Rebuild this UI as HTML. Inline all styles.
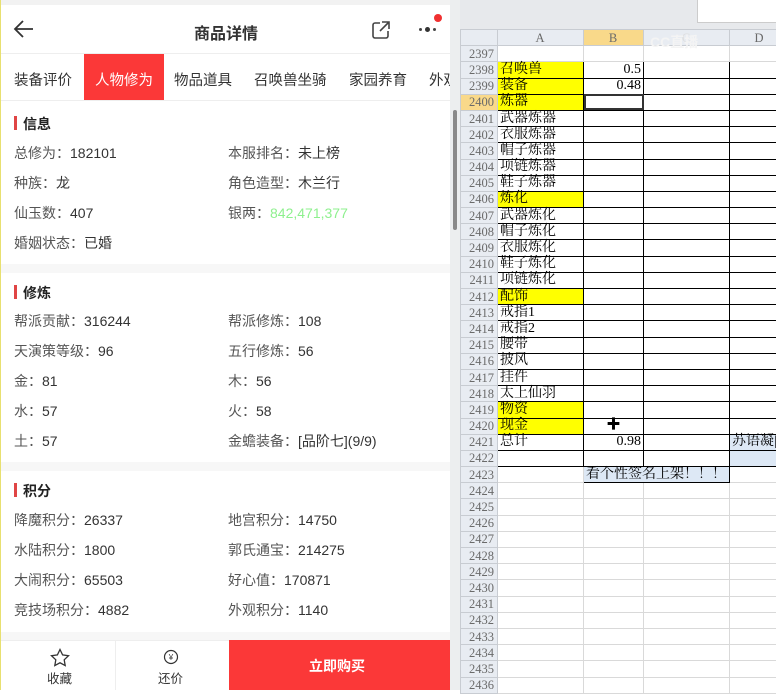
<!DOCTYPE html>
<html><head><meta charset="utf-8"><style>
*{margin:0;padding:0;box-sizing:border-box}
body{width:776px;height:690px;overflow:hidden;position:relative;background:#fff;font-family:"Liberation Sans","Noto Sans CJK SC",sans-serif}
#L{position:absolute;left:0;top:0;width:452px;height:690px;background:#fff;border-left:1px solid #e8e070;overflow:hidden}
.a{position:absolute;white-space:nowrap}
.t{font-size:14px;color:#555}
.t b{font-weight:normal;color:#333}
.h{font-size:14px;font-weight:bold;color:#222;padding-left:9px}
.h:before{content:"";position:absolute;left:0;top:2px;width:3px;height:14px;background:#e04545}
.sep{position:absolute;left:0;width:452px;background:#f7f7f7}
#R{position:absolute;left:450px;top:0;width:326px;height:690px;background:#fff}
table{border-collapse:collapse;table-layout:fixed;width:329px;font-family:"Liberation Serif","Noto Serif CJK SC",serif;font-size:14px}
td{height:16.2px;border:1px solid #d9d9d9;padding:0 2px;line-height:14px;overflow:visible;white-space:nowrap;color:#000}
td.n{background:#e8ecf2;color:#6a6a6a;text-align:right;font-size:12.5px;border-color:#c8ccd2;padding-right:3px}
td.y{background:#ffff00}
td.k{border-color:#000}
td.r{text-align:right}
</style></head><body>
<div id="L">
 <div style="position:absolute;left:0;top:0;width:452px;height:5px;background:#f2f2f2"></div>
 <svg class="a" style="left:12px;top:18px" width="22" height="22" viewBox="0 0 22 22"><path d="M20 11H3M10 3L2 11l8 8" fill="none" stroke="#333" stroke-width="1.8"/></svg>
 <div class="a" style="left:193px;top:20px;font-size:16px;font-weight:bold;color:#333">商品详情</div>
 <svg class="a" style="left:370px;top:20px" width="20" height="20" viewBox="0 0 20 20"><path d="M9 3H4a2 2 0 0 0-2 2v11a2 2 0 0 0 2 2h11a2 2 0 0 0 2-2v-5M11 2h7v7M18 2l-9 9" fill="none" stroke="#444" stroke-width="1.6"/></svg>
 <div class="a" style="left:418px;top:28px;width:3px;height:3px;border-radius:2px;background:#444"></div>
 <div class="a" style="left:424px;top:27px;width:5px;height:5px;border-radius:3px;background:#333"></div>
 <div class="a" style="left:432px;top:28px;width:3px;height:3px;border-radius:2px;background:#444"></div>
 <div class="a" style="left:433px;top:14px;width:8px;height:8px;border-radius:4px;background:#f03030"></div>
 <div style="position:absolute;left:0;top:53px;width:452px;height:1px;background:#eee"></div>
 <div class="a" style="left:83px;top:54px;width:80px;height:46px;background:#fb3838"></div>
 <div class="a t" style="top:69px;left:13px;color:#333;font-size:14.5px">装备评价</div>
 <div class="a t" style="top:69px;left:94px;color:#fff;font-size:14.5px">人物修为</div>
 <div class="a t" style="top:69px;left:173px;color:#333;font-size:14.5px">物品道具</div>
 <div class="a t" style="top:69px;left:253px;color:#333;font-size:14.5px">召唤兽坐骑</div>
 <div class="a t" style="top:69px;left:348px;color:#333;font-size:14.5px">家园养育</div>
 <div class="a t" style="top:69px;left:428px;color:#333;font-size:14.5px">外观</div>
 <div style="position:absolute;left:0;top:100px;width:452px;height:1px;background:#eee"></div>

 <div class="a h" style="left:13px;top:114px">信息</div>
 <div class="a t" style="left:13px;top:143px">总修为：<b>182101</b></div><div class="a t" style="left:227px;top:143px">本服排名：<b>未上榜</b></div>
 <div class="a t" style="left:13px;top:173px">种族：<b>龙</b></div><div class="a t" style="left:227px;top:173px">角色造型：<b>木兰行</b></div>
 <div class="a t" style="left:13px;top:203px">仙玉数：<b>407</b></div><div class="a t" style="left:227px;top:203px">银两：<span style="color:#8ef08e">842,471,377</span></div>
 <div class="a t" style="left:13px;top:233px">婚姻状态：<b>已婚</b></div>
 <div class="sep" style="top:264px;height:9px"></div>

 <div class="a h" style="left:13px;top:283px">修炼</div>
 <div class="a t" style="left:13px;top:311px">帮派贡献：<b>316244</b></div><div class="a t" style="left:227px;top:311px">帮派修炼：<b>108</b></div>
 <div class="a t" style="left:13px;top:341px">天演策等级：<b>96</b></div><div class="a t" style="left:227px;top:341px">五行修炼：<b>56</b></div>
 <div class="a t" style="left:13px;top:371px">金：<b>81</b></div><div class="a t" style="left:227px;top:371px">木：<b>56</b></div>
 <div class="a t" style="left:13px;top:401px">水：<b>57</b></div><div class="a t" style="left:227px;top:401px">火：<b>58</b></div>
 <div class="a t" style="left:13px;top:431px">土：<b>57</b></div><div class="a t" style="left:227px;top:431px">金蟾装备：<b>[品阶七](9/9)</b></div>
 <div class="sep" style="top:462px;height:9px"></div>

 <div class="a h" style="left:13px;top:481px">积分</div>
 <div class="a t" style="left:13px;top:510px">降魔积分：<b>26337</b></div><div class="a t" style="left:227px;top:510px">地宫积分：<b>14750</b></div>
 <div class="a t" style="left:13px;top:540px">水陆积分：<b>1800</b></div><div class="a t" style="left:227px;top:540px">郭氏通宝：<b>214275</b></div>
 <div class="a t" style="left:13px;top:570px">大闹积分：<b>65503</b></div><div class="a t" style="left:227px;top:570px">好心值：<b>170871</b></div>
 <div class="a t" style="left:13px;top:600px">竞技场积分：<b>4882</b></div><div class="a t" style="left:227px;top:600px">外观积分：<b>1140</b></div>
 <div class="sep" style="top:632px;height:8px"></div>

 <div style="position:absolute;left:0;top:640px;width:452px;height:50px;background:#fff;border-top:1px solid #eee"></div>
 <div style="position:absolute;left:114px;top:641px;width:1px;height:49px;background:#eee"></div>
 <svg class="a" style="left:49px;top:648px" width="20" height="19" viewBox="0 0 20 19"><path d="M10 1.5l2.6 5.4 5.9.8-4.3 4.1 1 5.8L10 14.8l-5.2 2.8 1-5.8L1.5 7.7l5.9-.8z" fill="none" stroke="#333" stroke-width="1.3"/></svg>
 <div class="a" style="left:46px;top:668px;font-size:12.5px;color:#333">收藏</div>
 <svg class="a" style="left:161px;top:649px" width="18" height="18" viewBox="0 0 18 18"><circle cx="9" cy="8" r="6.5" fill="none" stroke="#333" stroke-width="1.2"/><text x="9" y="11" font-size="8" text-anchor="middle" fill="#333">¥</text></svg>
 <div class="a" style="left:157px;top:668px;font-size:12.5px;color:#333">还价</div>
 <div class="a" style="left:228px;top:640px;width:224px;height:50px;background:#fb3838"></div>
 <div class="a" style="left:308px;top:656px;font-size:14px;font-weight:bold;color:#fff">立即购买</div>
</div>

<div id="R">
 <div style="position:absolute;left:0;top:0;width:10px;height:690px;background:#eceeef"></div>
 <div style="position:absolute;left:3px;top:110px;width:4px;height:120px;background:#8a8a8a;border-radius:2px"></div>
 <div style="position:absolute;left:10px;top:0;width:316px;height:29px;background:#e7e9ec"></div>
 <div style="position:absolute;left:247px;top:0;width:79px;height:23px;background:#fff;border-left:1px solid #ccc;border-bottom:1px solid #ccc"></div>
 <table style="position:absolute;left:10px;top:29px">
 <colgroup><col style="width:37px"><col style="width:86px"><col style="width:60px"><col style="width:86px"><col style="width:60px"></colgroup>
 <tr style="height:16.2px"><td class="n" style="text-align:center"></td><td class="n" style="text-align:center">A</td><td class="n" style="text-align:center;background:#f9d98a">B</td><td class="n" style="text-align:center;color:#ddd">C</td><td class="n" style="text-align:center">D</td></tr>
 <tr><td class="n">2397</td><td></td><td></td><td></td><td></td></tr>
 <tr><td class="n">2398</td><td class="y k">召唤兽</td><td class="k r">0.5</td><td class="k"></td><td class="k"></td></tr>
 <tr><td class="n">2399</td><td class="y k">装备</td><td class="k r">0.48</td><td class="k"></td><td class="k"></td></tr>
 <tr><td class="n" style="background:#f9d98a">2400</td><td class="y k">炼器</td><td class="k" style="outline:2px solid #333;outline-offset:-2px"></td><td class="k"></td><td class="k"></td></tr>
 <tr><td class="n">2401</td><td class="k">武器炼器</td><td class="k"></td><td class="k"></td><td class="k"></td></tr>
 <tr><td class="n">2402</td><td class="k">衣服炼器</td><td class="k"></td><td class="k"></td><td class="k"></td></tr>
 <tr><td class="n">2403</td><td class="k">帽子炼器</td><td class="k"></td><td class="k"></td><td class="k"></td></tr>
 <tr><td class="n">2404</td><td class="k">项链炼器</td><td class="k"></td><td class="k"></td><td class="k"></td></tr>
 <tr><td class="n">2405</td><td class="k">鞋子炼器</td><td class="k"></td><td class="k"></td><td class="k"></td></tr>
 <tr><td class="n">2406</td><td class="y k">炼化</td><td class="k"></td><td class="k"></td><td class="k"></td></tr>
 <tr><td class="n">2407</td><td class="k">武器炼化</td><td class="k"></td><td class="k"></td><td class="k"></td></tr>
 <tr><td class="n">2408</td><td class="k">帽子炼化</td><td class="k"></td><td class="k"></td><td class="k"></td></tr>
 <tr><td class="n">2409</td><td class="k">衣服炼化</td><td class="k"></td><td class="k"></td><td class="k"></td></tr>
 <tr><td class="n">2410</td><td class="k">鞋子炼化</td><td class="k"></td><td class="k"></td><td class="k"></td></tr>
 <tr><td class="n">2411</td><td class="k">项链炼化</td><td class="k"></td><td class="k"></td><td class="k"></td></tr>
 <tr><td class="n">2412</td><td class="y k">配饰</td><td class="k"></td><td class="k"></td><td class="k"></td></tr>
 <tr><td class="n">2413</td><td class="k">戒指1</td><td class="k"></td><td class="k"></td><td class="k"></td></tr>
 <tr><td class="n">2414</td><td class="k">戒指2</td><td class="k"></td><td class="k"></td><td class="k"></td></tr>
 <tr><td class="n">2415</td><td class="k">腰带</td><td class="k"></td><td class="k"></td><td class="k"></td></tr>
 <tr><td class="n">2416</td><td class="k">披风</td><td class="k"></td><td class="k"></td><td class="k"></td></tr>
 <tr><td class="n">2417</td><td class="k">挂件</td><td class="k"></td><td class="k"></td><td class="k"></td></tr>
 <tr><td class="n">2418</td><td class="k">太上仙羽</td><td class="k"></td><td class="k"></td><td class="k"></td></tr>
 <tr><td class="n">2419</td><td class="y k">物资</td><td class="k"></td><td class="k"></td><td class="k"></td></tr>
 <tr><td class="n">2420</td><td class="y k">现金</td><td class="k" style="text-align:center;font-weight:bold">✚</td><td class="k"></td><td class="k"></td></tr>
 <tr><td class="n">2421</td><td class="k">总计</td><td class="k r">0.98</td><td class="k"></td><td class="k" style="background:#dde8f5">苏语凝|</td></tr>
 <tr><td class="n">2422</td><td class="k"></td><td class="k"></td><td class="k"></td><td class="k" style="background:#dde8f5"></td></tr>
 <tr><td class="n">2423</td><td></td><td class="k" colspan="2" style="background:#dde8f5">看个性签名上架！！！</td><td></td></tr>
 <tr><td class="n">2424</td><td></td><td></td><td></td><td></td></tr>
 <tr><td class="n">2425</td><td></td><td></td><td></td><td></td></tr>
 <tr><td class="n">2426</td><td></td><td></td><td></td><td></td></tr>
 <tr><td class="n">2427</td><td></td><td></td><td></td><td></td></tr>
 <tr><td class="n">2428</td><td></td><td></td><td></td><td></td></tr>
 <tr><td class="n">2429</td><td></td><td></td><td></td><td></td></tr>
 <tr><td class="n">2430</td><td></td><td></td><td></td><td></td></tr>
 <tr><td class="n">2431</td><td></td><td></td><td></td><td></td></tr>
 <tr><td class="n">2432</td><td></td><td></td><td></td><td></td></tr>
 <tr><td class="n">2433</td><td></td><td></td><td></td><td></td></tr>
 <tr><td class="n">2434</td><td></td><td></td><td></td><td></td></tr>
 <tr><td class="n">2435</td><td></td><td></td><td></td><td></td></tr>
 <tr><td class="n">2436</td><td></td><td></td><td></td><td></td></tr>
 </table>
 <div class="a" style="left:200px;top:32px;font-size:14px;color:#f4f4f4;font-weight:bold">CC直播</div>
</div>
</body></html>
